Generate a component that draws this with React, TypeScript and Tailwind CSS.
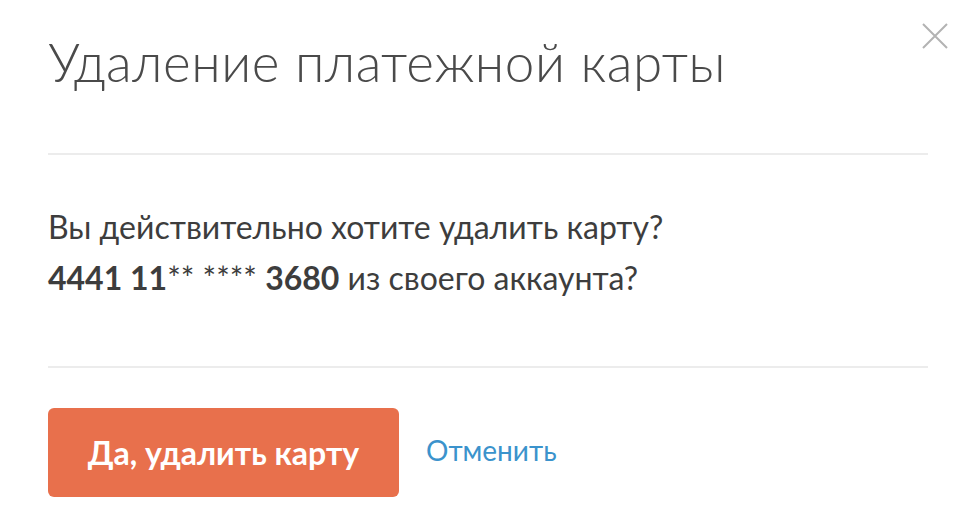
import React from 'react';

export default function App() {
  return (
    <div className="min-h-screen bg-white" style={{ fontFamily: 'Lato, "Open Sans", sans-serif' }}>
      <div className="relative pl-12 pr-[46px] pt-[24px]">
        <button className="absolute right-[26px] top-[23px] text-[#b3b3b3]" aria-label="Закрыть">
          <svg width="26" height="26" viewBox="0 0 26 26" fill="none" stroke="currentColor" strokeWidth="2">
            <path d="M1 1L25 25M25 1L1 25" />
          </svg>
        </button>
        <h1 className="h-[76px] text-[53px] font-light leading-[76px] text-[#4a4a4a] tracking-[0.55px]">
          Удаление платежной карты
        </h1>
        <div className="mt-[53px] h-[2px] bg-[#ececec]" />
        <div className="pt-[46px] pb-[63px] text-[32px] leading-[51px] text-[#3d3d3d]">
          <p>Вы действительно хотите удалить карту?</p>
          <p>
            <span className="font-bold">4441 11</span>** **** <span className="font-bold">3680</span> из своего аккаунта?
          </p>
        </div>
        <div className="h-[2px] bg-[#ececec]" />
        <div className="mt-[40px] flex items-center gap-[27px]">
          <button className="h-[89px] w-[351px] rounded-md bg-[#e8704c] text-[32px] font-bold text-white">
            Да, удалить карту
          </button>
          <a href="#" className="-mt-[6px] text-[28px] text-[#3b93cc]">Отменить</a>
        </div>
      </div>
    </div>
  );
}
